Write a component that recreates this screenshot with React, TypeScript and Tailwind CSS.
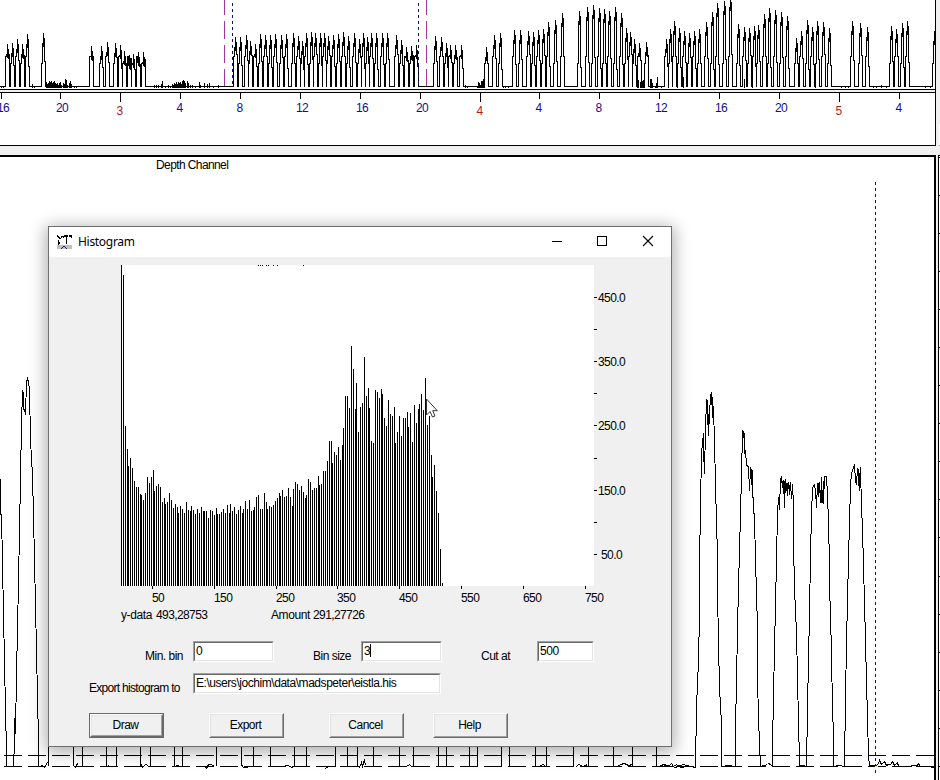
import type { ReactNode } from 'react';

type Point = [number, number];

// dive peaks of the overview strip: x, top
const overviewPeaks: Point[] = [
  [7, 44], [12, 43], [17, 39], [22, 44], [27, 34], [43, 33], [91, 46], [101, 46], [107, 42], [115, 43],
  [120, 45], [124, 51], [129, 55], [133, 54], [138, 52], [143, 52],
  [235, 37], [240, 37], [246, 35], [250, 41], [255, 44], [260, 34], [265, 35], [270, 35], [275, 34],
  [281, 35], [286, 34], [293, 33], [298, 36], [302, 41], [306, 33], [311, 32], [315, 33], [320, 33],
  [324, 33], [328, 36], [333, 35], [338, 34], [343, 32], [348, 36], [354, 33], [359, 39], [363, 33],
  [367, 37], [371, 33], [376, 33], [382, 33], [387, 33], [396, 35], [401, 40], [406, 47], [411, 46],
  [416, 45], [435, 36], [441, 37], [446, 43], [450, 45], [455, 45], [461, 45], [486, 47], [494, 35],
  [500, 33], [514, 30], [520, 30], [528, 31], [533, 32], [538, 30], [543, 29], [548, 22], [555, 20],
  [562, 13], [579, 11], [587, 7], [593, 5], [599, 8], [604, 9], [609, 11], [615, 7], [621, 13],
  [626, 28], [630, 32], [634, 39], [639, 43], [646, 42], [666, 39], [670, 29], [674, 21], [679, 28],
  [684, 31], [689, 33], [694, 31], [699, 29], [706, 22], [712, 12], [717, 3], [724, 1], [730, -3],
  [738, 24], [744, 27], [749, 28], [754, 26], [758, 25], [764, 14], [769, 8], [775, 10], [781, 12],
  [787, 16], [796, 38], [801, 31], [807, 20], [812, 27], [817, 21], [823, 22], [829, 28], [852, 21],
  [860, 23], [867, 27], [891, 26], [896, 29], [902, 23], [907, 21], [934, 31],
];

// surface noise between the dives: x, top
const overviewNoise: Point[] = [
  [1, 85], [3, 85], [32, 83], [34, 85], [46, 81], [47, 83], [48, 82], [49, 80], [50, 81], [51, 80],
  [52, 82], [53, 81], [54, 80], [55, 82], [56, 83], [57, 82], [58, 84], [59, 82], [60, 81], [61, 84],
  [63, 82], [64, 83], [65, 78], [66, 79], [67, 84], [69, 82], [70, 80], [71, 83], [74, 85], [76, 85],
  [154, 84], [156, 84], [158, 84], [161, 83], [162, 80], [165, 85], [168, 84], [170, 85], [172, 83],
  [173, 84], [174, 82], [175, 83], [176, 81], [177, 83], [178, 81], [179, 82], [180, 81], [181, 83],
  [182, 80], [183, 79], [184, 80], [185, 82], [187, 80], [188, 82], [190, 84], [192, 84], [195, 85],
  [199, 81], [200, 84], [204, 82], [207, 83], [209, 82], [213, 85], [218, 84], [465, 84], [467, 85],
  [477, 85], [478, 81], [479, 82], [480, 84], [481, 80], [482, 80], [483, 78], [484, 82], [503, 85],
  [505, 85], [508, 85], [637, 78], [638, 79], [640, 81], [641, 80], [642, 80], [643, 79], [644, 78],
  [650, 78], [651, 78], [652, 82], [655, 85], [656, 82], [657, 76], [661, 85], [668, 66], [677, 68],
  [683, 76], [744, 78], [752, 80], [815, 76], [841, 85], [845, 85], [848, 85], [873, 85], [876, 85],
  [881, 84], [886, 85], [925, 85], [930, 85],
];

const overviewTicks: { x: number; label: string; day?: boolean }[] = [
  { x: 1, label: '16' }, { x: 60, label: '20' }, { x: 120, label: '3', day: true },
  { x: 180, label: '4' }, { x: 240, label: '8' }, { x: 300, label: '12' },
  { x: 360, label: '16' }, { x: 420, label: '20' }, { x: 480, label: '4', day: true },
  { x: 539, label: '4' }, { x: 599, label: '8' }, { x: 659, label: '12' },
  { x: 719, label: '16' }, { x: 779, label: '20' }, { x: 839, label: '5', day: true },
  { x: 899, label: '4' },
];

const leftTrace =
  '0,478 0,514 1,514 2,563 3,614 4,661 5,710 6,750 6,766 13,766 14,742 14,718 15,733 16,673 17,630 18,580 19,532 20,477 21,424 22,390 23,409 24,409 25,414 26,381 27,378 28,382 29,389 30,440 32,475 33,515 34,560 35,605 36,650 37,697 38,740 38,765';

const rightTrace =
  '660,766 668,765 675,767 683,764 690,766 695,767 696,707 698,660 699,615 699,563 700,507 701,452 703,433 703,450 704,473 705,429 706,399 707,400 707,413 708,435 709,413 710,396 711,392 712,417 713,406 714,443 715,482 716,523 717,553 717,590 718,643 719,687 721,723 721,766 ' +
  '728,765 735,766 735,728 736,680 737,630 738,585 739,552 740,512 741,477 742,430 743,432 744,443 744,453 745,450 746,465 748,466 749,490 750,467 751,483 751,469 752,480 753,513 754,513 755,563 756,590 757,630 757,677 758,718 760,766 ' +
  '764,765 767,764 768,763 770,764 772,766 772,743 773,697 774,647 775,606 776,559 777,513 778,497 779,509 780,479 781,477 782,487 783,480 784,507 785,479 786,485 787,495 788,482 789,494 790,482 791,498 792,484 793,505 793,542 794,588 796,632 797,677 798,722 799,760 799,765 ' +
  '802,765 806,766 807,710 808,657 809,615 810,553 811,515 812,487 814,484 815,490 816,507 817,483 818,494 819,482 820,502 821,477 822,502 823,503 824,476 826,476 827,495 828,522 829,565 829,590 830,610 831,658 832,705 833,737 833,766 ' +
  '838,765 844,766 845,697 846,643 847,600 848,558 849,523 850,485 851,473 853,467 854,465 855,480 856,484 857,468 858,480 859,490 860,467 861,508 862,527 863,567 864,600 865,642 866,680 867,718 868,755 869,765 ' +
  '875,765 878,764 879,760 881,764 882,763 884,761 886,765 888,764 890,764 892,761 894,765 897,762 898,766 902,766 908,766 914,765 917,765 918,763 920,766 928,766 934,767';

// doubled strokes where the trace jitters at the bottom of a dive
const jitter: [number, number, number][] = [
  [23, 391, 409], [703, 433, 452], [707, 400, 413], [708, 413, 435], [712, 396, 417], [744, 432, 452],
  [751, 469, 484], [752, 469, 480], [782, 480, 486], [784, 480, 506], [787, 482, 495], [789, 484, 494],
  [792, 484, 491], [818, 482, 496], [821, 477, 502], [823, 480, 502], [858, 468, 480], [859, 472, 480],
  [14, 720, 733],
];

// lines that reach the surface under the dialog
const surfaceLines = [
  48, 73, 82, 106, 116, 140, 150, 174, 182, 216, 241, 253, 270, 294, 306, 335, 347, 357, 373, 399, 413,
  438, 446, 469, 477, 501, 509, 535, 546, 573, 588, 613, 632, 656,
];

const surfaceNoise = [
  '40,766 42,765 44,767 47,762', '73,765 75,767 77,763', '106,766 109,765', '140,762 142,767 145,764 148,765',
  '174,766 178,765 180,767', '204,766 206,768 208,764 214,765', '241,764 243,767 252,766', '282,766 288,765 293,768',
  '325,768 328,766 335,766', '357,765 359,767 361,762 362,766 364,759 365,765', '406,766 409,764 412,767',
  '540,765 543,764 545,766', '575,767 578,764 583,766 587,764', '617,766 620,764 624,763 628,765 632,764',
  '660,765 664,764 668,766 671,763 673,766 676,764 680,767 688,766',
];

// bin heights in pixels, seven bins to a row
const bins = [
  321, 311, 160, 137, 120, 128, 118,
  105, 99, 99, 92, 91, 86, 93,
  109, 103, 109, 116, 95, 100, 102,
  99, 84, 88, 82, 84, 93, 86,
  78, 82, 79, 73, 80, 77, 73,
  84, 76, 75, 80, 76, 72, 77,
  73, 79, 75, 75, 75, 68, 76,
  75, 71, 78, 72, 72, 74, 77,
  73, 81, 73, 82, 75, 79, 72,
  76, 80, 73, 77, 85, 77, 86,
  75, 76, 79, 89, 91, 77, 77,
  93, 84, 77, 80, 79, 81, 85,
  88, 93, 90, 96, 89, 90, 98,
  89, 80, 97, 104, 102, 96, 100,
  94, 88, 91, 107, 104, 96, 98,
  98, 110, 101, 102, 115, 115, 125,
  145, 145, 123, 134, 131, 139, 126,
  141, 158, 190, 190, 178, 240, 217,
  177, 203, 154, 179, 183, 229, 190,
  198, 178, 145, 143, 196, 194, 188,
  197, 192, 168, 160, 186, 172, 170,
  179, 143, 154, 170, 150, 168, 168,
  174, 159, 173, 144, 181, 163, 177,
  182, 192, 176, 208, 161, 170, 131,
  109, 121, 95, 73, 37, 3,
];

const xLabels = [[31, 50], [93, 150], [155, 250], [216, 350], [278, 450], [340, 550], [402, 650], [464, 750]];
const yTicks: [number, string][] = [
  [32, '450.0'], [64, ''], [96, '350.0'], [128, ''], [160, '250.0'], [193, ''], [225, '150.0'], [257, ''], [289, '50.0'],
];

function peakPoints([x, top]: Point, i: number) {
  const left = 56 + ((i * 7) % 14);
  const right = 54 + ((i * 11) % 16);
  return `${x - 2},86 ${x - 2},${left} ${x - 1},${left} ${x - 1},${top + 10} ${x},${top + 10} ${x},${top} ${x + 1},${top + 12} ${x + 1},${right} ${x + 2},${right} ${x + 2},86`;
}

function Overview() {
  return (
    <section className="w-[936px] h-[146px] shrink-0 bg-white border-r border-b border-black">
      <svg width="935" height="145" className="block" shapeRendering="crispEdges">
        <g transform="translate(.5 .5)" fill="none" stroke="#000">
          <polyline points={'-2,86 ' + overviewPeaks.map(peakPoints).join(' ')} />
          <path d={overviewPeaks.map(([x, t]) => `M${x} ${t}v13M${x + 1} ${t + 4}v10`).join('')} />
          <path d={overviewNoise.map(([x, t]) => `M${x} ${t}V87`).join('')} />
        </g>
        <path d="M224.5 -3V86M426.5 -3V86" stroke="#a534a5" strokeDasharray="18 6" />
        <path d="M232.5 3V86M418.5 3V86" stroke="#10107a" strokeDasharray="3 3" />
        <rect y="90" width="935" height="2" fill="#f0f0f0" />
        <path d="M0 89.5H935M0 92.5H935" stroke="#000" />
        <path d={overviewTicks.map((t) => `M${t.x + 0.5} 93V${t.day ? 102 : 99}`).join('')} stroke="#000" />
        {overviewTicks.map((t) => (
          <text
            key={t.x}
            x={t.x + (t.label.length > 1 ? 2 : -0.5)}
            y={t.day ? 115 : 112}
            textAnchor="middle"
            fill={t.day ? '#b01c1c' : '#10108c'}
            className="text-[12px] tracking-[-0.6px]"
          >
            {t.label}
          </text>
        ))}
      </svg>
    </section>
  );
}

function DepthChannel() {
  return (
    <section className="w-[936px] h-full shrink-0 bg-white border-t-2 border-r-2 border-black">
      <svg width="934" height="623" viewBox="0 157 934 623" className="block" shapeRendering="crispEdges">
        <text x="156" y="169" className="text-[12px] tracking-[-0.6px]">Depth Channel</text>
        <path d="M0 755.5H934M0 766.5H934" stroke="#000" strokeDasharray="18 6" strokeDashoffset="20" />
        <g transform="translate(.5 .5)" fill="none" stroke="#000">
          <polyline points={leftTrace} />
          <polyline points={rightTrace} />
          <path d={jitter.map(([x, y1, y2]) => `M${x} ${y1}V${y2}`).join('')} />
          <path d={surfaceLines.map((x) => `M${x} ${x === 48 ? 722 : 740}V765`).join('')} />
          {surfaceNoise.map((points) => <polyline key={points} points={points} />)}
        </g>
        <path d="M875.5 182V773" stroke="#14144e" strokeDasharray="3 3" />
        <path d="M875 766h3" stroke="#f4f0a0" />
      </svg>
    </section>
  );
}

function HistogramPlot() {
  return (
    <svg width="540" height="343" className="ml-[72px] mt-2 block shrink-0">
      <g shapeRendering="crispEdges">
        <rect width="473" height="321" fill="#fff" />
        {bins.map((h, i) => (
          <rect key={i} x={Math.round(i * 1.854)} y={321 - h} width="1" height={h} />
        ))}
        {[137, 139, 141, 145, 147, 152, 156, 182].map((x) => <rect key={x} x={x} width="1" height="1" />)}
        <path d={xLabels.map(([x]) => `M${x}.5 321v3`).join('')} stroke="#000" />
        <path d={yTicks.map(([y]) => `M473 ${y}.5h3`).join('')} stroke="#000" />
      </g>
      {xLabels.map(([x, value]) => (
        <text key={value} x={x} y="337" className="text-[12px] tracking-[-0.6px]">{value}</text>
      ))}
      {yTicks.map(([y, label]) => (
        <text key={y} x={label === '50.0' ? 480 : 477} y={y + 5} className="text-[12px] tracking-[-0.6px]">{label}</text>
      ))}
    </svg>
  );
}

function Field({ value, width, caret }: { value: string; width: string; caret?: boolean }) {
  return (
    <div className={`${width} h-[21px] border border-t-[#a0a0a0] border-l-[#a0a0a0] border-r-white border-b-white`}>
      <div className="h-full flex bg-white border border-t-[#696969] border-l-[#696969] border-r-[#e3e3e3] border-b-[#e3e3e3] pl-[1px] pt-[1px] leading-[14px] tracking-[-0.45px]">
        {value}
        {caret && <span className="w-px h-[13px] bg-black" />}
      </div>
    </div>
  );
}

function Button({ children, primary }: { children: ReactNode; primary?: boolean }) {
  return (
    <button className={`w-[75px] h-[25px] flex ${primary ? 'border border-[#696969]' : ''}`}>
      <span className="flex-1 h-full flex border border-t-white border-l-white border-r-[#696969] border-b-[#696969]">
        <span className="flex-1 flex items-center justify-center border border-t-[#e3e3e3] border-l-[#e3e3e3] border-r-[#a0a0a0] border-b-[#a0a0a0] leading-[14px] pb-px pr-[2px]">
          {children}
        </span>
      </span>
    </button>
  );
}

function TitleBar() {
  return (
    <header className="h-[30px] shrink-0 bg-white flex items-center">
      <svg width="16" height="16" className="ml-2 mr-[5px] mb-px" shapeRendering="crispEdges">
        <rect y="11" width="15" height="4" fill="#c0c0c0" />
        <path d="M0 1h1v1h1v1h1v1h1v1h-2v-1h-1v-1h-1zM1 6h1v5h-1zM2 8h1v2h-1zM4 2h2v1h-1v1h-1zM7 1h4v2h-1v7h-1v-7h-2v1h-1v-2h1zM12 1h3v3h-1v-1h-2z" />
        <path d="M6 12h2v1h-2zM5 13h1v1h-1zM8 13h1v1h-1zM4 14h1v1h-1zM9 14h1v1h-1z" fill="#222255" />
      </svg>
      <h1 className="font-['Noto_Sans',sans-serif] text-[12px] tracking-[-0.3px] flex-1">Histogram</h1>
      <svg width="123" height="30" fill="none" stroke="#000" className="block">
        <path d="M4 14.5h10" shapeRendering="crispEdges" />
        <rect x="49.5" y="9.5" width="9" height="9" shapeRendering="crispEdges" />
        <path d="M95 9l10 10M105 9l-10 10" strokeWidth="1.1" />
      </svg>
    </header>
  );
}

function HistogramDialog() {
  return (
    <div className="absolute left-[48px] top-[226px] w-[624px] h-[521px] flex flex-col bg-[#f0f0f0] border border-[#6e6e6e] shadow-[0_3px_16px_2px_rgba(0,0,0,0.33)]">
      <TitleBar />
      <HistogramPlot />
      <div className="flex pl-[72px] h-[14px] leading-[14px] tracking-[-0.6px]">
        <span className="w-[35px] tracking-[-0.4px]">y-data</span>
        <span className="w-[115px]">493,28753</span>
        <span className="w-[42px] tracking-[-0.4px]">Amount</span>
        <span>291,27726</span>
      </div>
      <div className="flex pl-10 mt-[19px]">
        <label className="w-[104px] pl-14 pt-2 leading-[14px]">Min. bin</label>
        <Field value="0" width="w-[81px]" />
        <label className="w-[87px] pl-[39px] pt-2 leading-[14px] whitespace-nowrap">Bin size</label>
        <Field value="3" width="w-[81px]" caret />
        <label className="w-[95px] pl-[39px] pt-2 leading-[14px]">Cut at</label>
        <Field value="500" width="w-[57px]" />
      </div>
      <div className="flex pl-10 mt-[10px]">
        <label className="w-[104px] pt-2 leading-[14px] whitespace-nowrap tracking-[-0.7px]">Export histogram to</label>
        <Field value="E:\users\jochim\data\madspeter\eistla.his" width="w-[248px]" />
      </div>
      <div className="flex pl-10 mt-[18px] gap-[45px]">
        <Button primary>Draw</Button>
        <Button>Export</Button>
        <Button>Cancel</Button>
        <div className="-ml-4"><Button>Help</Button></div>
      </div>
    </div>
  );
}

export default function App() {
  return (
    <div className="relative w-[940px] h-[780px] overflow-hidden flex flex-col bg-[#f0f0f0] text-black font-['Liberation_Sans',Arial,sans-serif] text-[12px] tracking-[-0.5px]">
      <div className="flex">
        <Overview />
        <div className="ml-[3px] mt-[124px] w-px h-[22px] bg-white border-b border-[#888]" />
      </div>
      <div className="flex flex-1 mt-[9px]">
        <DepthChannel />
        <svg width="2" height="625" className="ml-[2px] bg-white block shrink-0" shapeRendering="crispEdges">
          <path d="M.5 0V625" stroke="#000" />
          <path d="M0 .5h2M0 2.5h2" stroke="#000" />
          <path d={Array.from({ length: 16 }, (_, i) => `M1 ${40 + i * 38.1}h1`).join('')} stroke="#000" />
        </svg>
      </div>
      <HistogramDialog />
      <svg width="14" height="20" className="absolute left-[425px] top-[398px]" fill="#fff" stroke="#333340">
        <path d="M1.5 1v16l3.5-3.5 2.5 5.5 2.5-1-2.3-5.3h4.6z" />
      </svg>
    </div>
  );
}
